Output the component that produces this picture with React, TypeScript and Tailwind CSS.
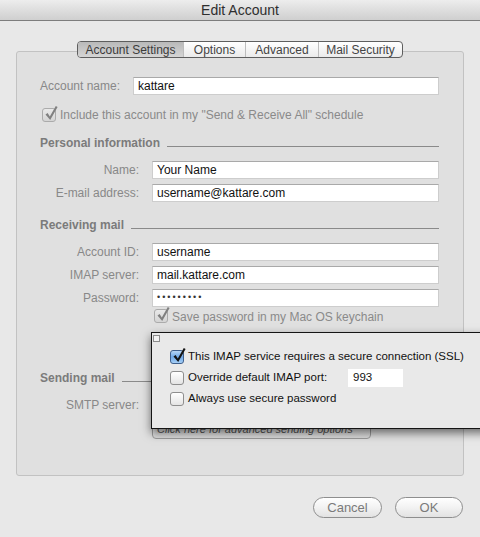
import React from 'react'

type BoxKind = 'disabled' | 'blue' | 'plain'

const BOX_STYLE: Record<BoxKind, string> = {
  disabled: 'border-[#ababab] bg-gradient-to-b from-[#e9e9e9] to-[#d4d4d4]',
  blue: 'border-[#3f5f8c] bg-gradient-to-b from-[#b7d6f5] via-[#6ea8e8] to-[#a6cff5]',
  plain: 'border-[#8e8e8e] bg-gradient-to-b from-white to-[#e4e4e4]',
}

function CheckBox({ kind, checked }: { kind: BoxKind; checked?: boolean }) {
  return (
    <div className={`relative w-[14px] h-[14px] shrink-0 rounded-[3px] border ${BOX_STYLE[kind]}`}>
      {checked && (
        <svg viewBox="0 0 14 16" className="absolute -top-[4px] left-[1px] w-[14px] h-[16px]">
          <path
            d="M1.5 9.5 L3.6 8 L5.8 11.6 L11.8 1 L13.6 2 L6.2 15 Z"
            fill={kind === 'disabled' ? '#808080' : '#141414'}
          />
        </svg>
      )}
    </div>
  )
}

function Field({ children, className = '' }: { children?: React.ReactNode; className?: string }) {
  return (
    <div
      className={`h-[18px] flex items-center bg-white border border-[#cdcdcd] border-t-[#a9a9a9] pl-[4px] text-[12px] text-[#111] ${className}`}
    >
      {children}
    </div>
  )
}

function Row({ label, children, className = '' }: { label: string; children?: React.ReactNode; className?: string }) {
  return (
    <div className={`flex items-center ${className}`}>
      <div className="w-[99px] shrink-0 text-right text-[#888]">{label}</div>
      <div className="ml-[13px] flex-1">{children}</div>
    </div>
  )
}

function Heading({ title, className = '' }: { title: string; className?: string }) {
  return (
    <div className={`flex items-center h-[14px] ${className}`}>
      <span className="font-bold text-[#7b7b7b]">{title}</span>
      <div className="ml-[7px] mt-[6px] flex-1 h-px bg-[#8a8a8a]" />
    </div>
  )
}

const TABS = [
  { label: 'Account Settings', w: 'w-[105px]' },
  { label: 'Options', w: 'w-[62px]' },
  { label: 'Advanced', w: 'w-[73px]' },
  { label: 'Mail Security', w: 'w-[84px]' },
]

export default function App() {
  return (
    <div className="relative w-[480px] h-[537px] overflow-hidden bg-[#e8e8e8] font-['Liberation_Sans',Arial,sans-serif] text-[12px] text-[#111]">
      {/* title bar */}
      <div className="h-[21px] flex items-center justify-center bg-gradient-to-b from-[#ededed] to-[#cfcfcf] border-b border-[#7d7d7d] text-[14px] text-[#2e2e2e]">
        Edit Account
      </div>

      <div className="px-[16px] pt-[20px]">
        {/* tabs */}
        <div className="relative z-10 flex justify-center -mb-[7px]">
          <div className="flex h-[17px] border border-[#5e5e5e] rounded-[4px] overflow-hidden bg-gradient-to-b from-white to-[#ebebeb] text-[#444]">
            {TABS.map((t, i) => (
              <div
                key={t.label}
                className={`${t.w} flex items-center justify-center ${
                  i === 0
                    ? 'bg-gradient-to-b from-[#b9b9b9] to-[#d5d5d5] text-[#3c3c3c]'
                    : 'border-l border-[#bdbdbd]'
                }`}
              >
                {t.label}
              </div>
            ))}
          </div>
        </div>

        {/* panel */}
        <div className="h-[425px] border border-[#c2c2c2] rounded-[3px] bg-[#e0e0e0] pl-[23px] pr-[24px] pt-[25px]">
          <div className="flex items-center">
            <div className="w-[93px] shrink-0 text-[#888]">Account name:</div>
            <Field className="flex-1">kattare</Field>
          </div>

          <div className="mt-[12px] ml-[2px] flex items-center h-[15px]">
            <CheckBox kind="disabled" checked />
            <span className="ml-[4px] text-[#8a8a8a]">Include this account in my "Send &amp; Receive All" schedule</span>
          </div>

          <Heading title="Personal information" className="mt-[14px]" />
          <Row label="Name:" className="mt-[11px]">
            <Field>Your Name</Field>
          </Row>
          <Row label="E-mail address:" className="mt-[5px]">
            <Field>username@kattare.com</Field>
          </Row>

          <Heading title="Receiving mail" className="mt-[16px]" />
          <Row label="Account ID:" className="mt-[11px]">
            <Field>username</Field>
          </Row>
          <Row label="IMAP server:" className="mt-[5px]">
            <Field>mail.kattare.com</Field>
          </Row>
          <Row label="Password:" className="mt-[5px]">
            <Field>
              <span className="text-[9px] tracking-[2px] text-[#333]">•••••••••</span>
            </Field>
          </Row>
          <div className="mt-[1px] ml-[114px] flex items-center h-[15px]">
            <CheckBox kind="disabled" checked />
            <span className="ml-[4px] mt-[3px] text-[#8a8a8a]">Save password in my Mac OS keychain</span>
          </div>

          <Heading title="Sending mail" className="mt-[48px]" />
          <Row label="SMTP server:" className="mt-[11px]">
            <Field />
          </Row>
          <div className="mt-[5px] ml-[112px] w-[219px] h-[20px] flex items-center pl-[4px] rounded-[4px] border border-[#9c9c9c] bg-gradient-to-b from-[#f4f4f4] to-[#dcdcdc] italic text-[11px] text-[#555] whitespace-nowrap overflow-hidden">
            Click here for advanced sending options
          </div>
        </div>

        {/* buttons */}
        <div className="mt-[21px] pr-[1px] flex justify-end gap-[13px]">
          <button className="w-[69px] h-[21px] rounded-full border border-[#8e8e8e] bg-gradient-to-b from-white via-[#f2f2f2] to-[#e2e2e2] text-[13px] text-[#7a7a7a]">
            Cancel
          </button>
          <button className="w-[68px] h-[21px] rounded-full border border-[#8e8e8e] bg-gradient-to-b from-white via-[#f2f2f2] to-[#e2e2e2] text-[13px] text-[#7a7a7a]">
            OK
          </button>
        </div>
      </div>

      {/* IMAP options popup */}
      <div className="absolute left-[151px] top-[332px] w-[340px] h-[97px] border border-[#141414] bg-[#e9e9e9] shadow-[0_4px_9px_rgba(0,0,0,0.55)] text-[11.5px]">
        <div className="ml-[1px] mt-[2px] w-[7px] h-[7px] border border-[#8c8c8c] bg-[#f3f3f3]" />
        <div className="pl-[18px] mt-[5px]">
          <div className="flex items-center h-[20px]">
            <CheckBox kind="blue" checked />
            <span className="ml-[4px]">This IMAP service requires a secure connection (SSL)</span>
          </div>
          <div className="flex items-center h-[21px]">
            <CheckBox kind="plain" />
            <span className="ml-[4px] w-[160px]">Override default IMAP port:</span>
            <div className="w-[55px] h-[18px] bg-white flex items-center pl-[5px]">993</div>
          </div>
          <div className="flex items-center h-[21px]">
            <CheckBox kind="plain" />
            <span className="ml-[4px]">Always use secure password</span>
          </div>
        </div>
      </div>
    </div>
  )
}
